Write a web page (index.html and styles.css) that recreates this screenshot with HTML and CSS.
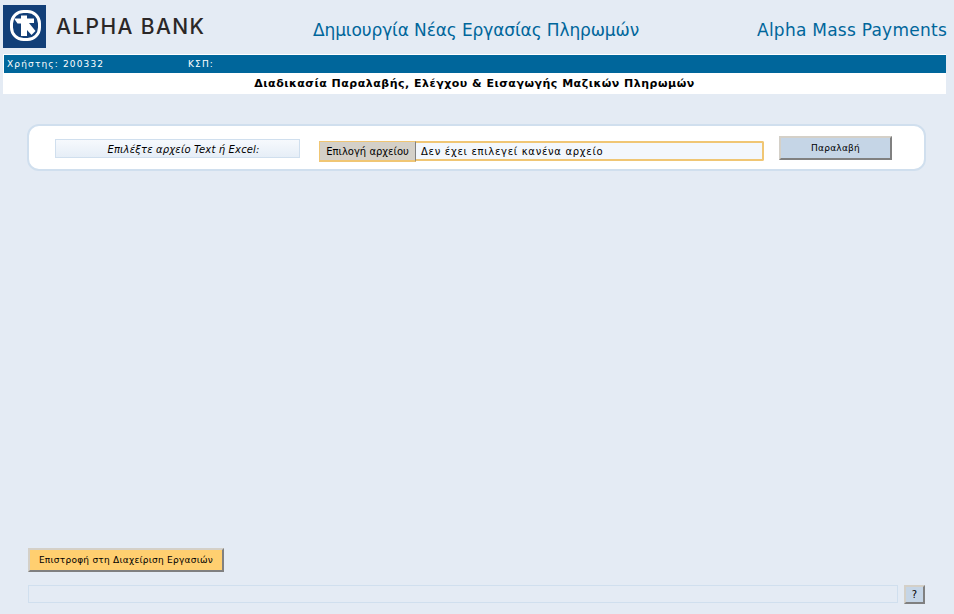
FILE: index.html
```html
<!DOCTYPE html>
<html lang="el">
  <head>
    <meta charset="UTF-8" />
    <meta name="viewport" content="width=device-width, initial-scale=1.0" />
    <title>Alpha Mass Payments</title>
    <link rel="stylesheet" href="styles.css">
  </head>
  <body>
    <div class="page">
      <div class="top-header">
        <div class="brand">
          <svg class="logo" width="43" height="43" viewBox="0 0 43 43">
            <rect width="43" height="43" fill="#123f78" />
            <rect x="8.500" y="6.500" width="28" height="28" rx="12" fill="none" stroke="#fff" stroke-width="3" />
            <path d="M11 13.500 H18 V10.500 H24 V13.500 H31 V18 H26 L32.500 26 L28.500 30 L24 25 V31 H18 V18.500 H14.500 Z" fill="#fff" />
          </svg>
          <span class="brand-name">ALPHA BANK</span>
        </div>
        <div class="page-title">Δημιουργία Νέας Εργασίας Πληρωμών</div>
        <div class="app-title">Alpha Mass Payments</div>
      </div>

      <div class="info-wrap">
        <div class="info-bar">
          <span class="info-user">Χρήστης: 200332</span>
          <span>ΚΣΠ:</span>
        </div>
        <div class="sub-title">Διαδικασία Παραλαβής, Ελέγχου &amp; Εισαγωγής Μαζικών Πληρωμών</div>
      </div>

      <div class="content">
        <div class="upload-card">
          <div class="upload-label">Επιλέξτε αρχείο Text ή Excel:</div>
          <div class="file-field">
            <button class="file-btn">Επιλογή αρχείου</button>
            <span class="file-name">Δεν έχει επιλεγεί κανένα αρχείο</span>
          </div>
          <button class="btn btn-upload">Παραλαβή</button>
        </div>
      </div>

      <div class="bottom">
        <button class="btn btn-back">Επιστροφή στη Διαχείριση Εργασιών</button>
        <div class="status-row">
          <div class="status-box"></div>
          <button class="btn btn-help">?</button>
        </div>
      </div>
    </div>
  </body>
</html>
```
FILE: styles.css
```css
html, body {
  margin: 0;
  height: 100%;
  overflow: hidden;
}

body {
  font-family: "DejaVu Sans", Verdana, sans-serif;
  background-color: #e4ebf4;
  color: #000;
}

.page {
  display: flex;
  flex-direction: column;
  height: 614px;
}

.top-header {
  display: flex;
  align-items: flex-start;
  height: 49px;
  padding: 5px 7px 0 3px;
}

.brand {
  display: flex;
  align-items: center;
  width: 310px;
}

.logo {
  flex: none;
}

.brand-name {
  margin-left: 10px;
  margin-top: -1px;
  font-family: "Inter", "Liberation Sans", sans-serif;
  font-size: 21px;
  font-weight: 500;
  letter-spacing: 1.4px;
  color: #2b2727;
}

.page-title,
.app-title {
  margin-top: 15px;
  font-size: 17px;
  line-height: 20px;
  color: #00669b;
}

.page-title {
  flex: 1;
  letter-spacing: -0.12px;
}

.app-title {
  letter-spacing: 0.25px;
}

.info-wrap {
  margin: 0 8px 0 3px;
  background-color: #fff;
  padding-top: 1px;
}

.info-bar {
  display: flex;
  height: 18px;
  margin-left: 1px;
  padding-left: 3px;
  align-items: center;
  background-color: #00669b;
  color: #fff;
  font-size: 9px;
  letter-spacing: 1.15px;
}

.info-user {
  width: 181px;
}

.sub-title {
  height: 21px;
  line-height: 22px;
  text-align: center;
  font-size: 11px;
  font-weight: bold;
  letter-spacing: 0.5px;
}

.content {
  flex: 1;
  padding: 30px 28px 0 27px;
}

.upload-card {
  display: flex;
  align-items: flex-start;
  height: 43px;
  background-color: #fff;
  border: 2px solid #d0dfee;
  border-radius: 12px;
  padding-left: 26px;
}

.upload-label {
  box-sizing: border-box;
  width: 245px;
  height: 19px;
  margin-top: 13px;
  padding-left: 12px;
  border: 1px solid #d0dfee;
  background: linear-gradient(to bottom, #f6f9fd, #e6eef7);
  text-align: center;
  font-size: 10px;
  font-style: italic;
  line-height: 19px;
  letter-spacing: 0.15px;
}

.file-field {
  display: flex;
  width: 445px;
  height: 20px;
  margin-left: 19px;
  margin-top: 15px;
}

.file-btn {
  width: 97px;
  height: 21px;
  padding: 0;
  background-color: #d4d0c8;
  border: 1px solid #f0c674;
  border-right-color: #808080;
  border-bottom: 2px solid #f0c674;
  font-family: inherit;
  font-size: 10px;
  color: #000;
}

.file-name {
  flex: 1;
  box-sizing: border-box;
  height: 20px;
  padding-left: 5px;
  background-color: #f3f7fc;
  border: 1px solid #f0c674;
  border-width: 2px 2px 2px 0;
  border-radius: 0 2px 2px 0;
  font-size: 10px;
  line-height: 18px;
  letter-spacing: 0.7px;
}

.btn {
  box-sizing: border-box;
  padding: 0;
  border: 2px solid;
  border-color: #d4d0c8 #808080 #808080 #d4d0c8;
  background-color: #c5d5e6;
  font-family: inherit;
  color: #000;
  font-size: 9px;
  letter-spacing: 0.25px;
}

.btn-upload {
  width: 113px;
  height: 24px;
  margin-left: 15px;
  margin-top: 10px;
}

.bottom {
  padding: 0 29px 10px 28px;
}

.btn-back {
  display: block;
  width: 196px;
  height: 24px;
  background-color: #ffcf70;
}

.status-row {
  display: flex;
  align-items: flex-start;
  margin-top: 13px;
}

.status-box {
  flex: 1;
  box-sizing: border-box;
  height: 18px;
  border: 1px solid #d0dfee;
}

.btn-help {
  width: 21px;
  height: 19px;
  margin-left: 6px;
  font-size: 10px;
  letter-spacing: 0;
}
```
